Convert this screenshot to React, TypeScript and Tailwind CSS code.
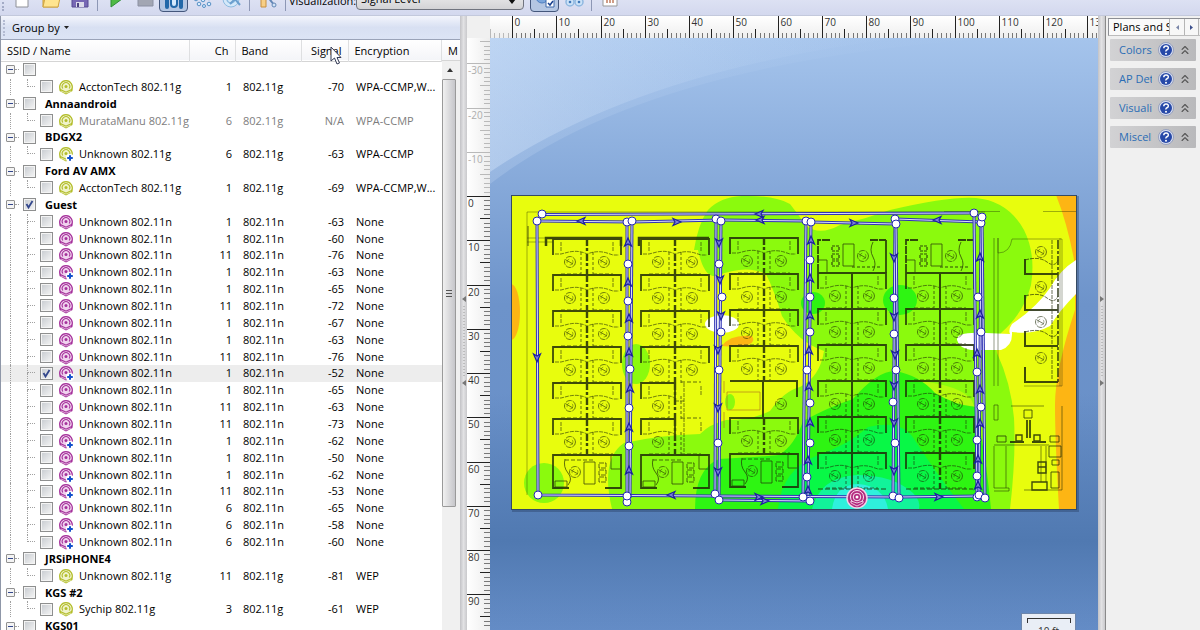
import React from 'react';
import clsx from 'clsx';
import { ChevronsUp } from 'lucide-react';

type AccessPoint = {
  name: string;
  ch: number;
  band: string;
  signal: string;
  encryption: string;
  plus?: boolean;
  checked?: boolean;
  dimmed?: boolean;
};

type Network = { ssid: string; checked?: boolean; points: AccessPoint[] };

const guest = (ch: number, signal: number, plus = false, checked = false): AccessPoint => ({
  name: 'Unknown 802.11n',
  ch,
  band: '802.11n',
  signal: String(signal),
  encryption: 'None',
  plus,
  checked,
});

const networks: Network[] = [
  { ssid: '', points: [{ name: 'AcctonTech 802.11g', ch: 1, band: '802.11g', signal: '-70', encryption: 'WPA-CCMP,W...' }] },
  { ssid: 'Annaandroid', points: [{ name: 'MurataManu 802.11g', ch: 6, band: '802.11g', signal: 'N/A', encryption: 'WPA-CCMP', dimmed: true }] },
  { ssid: 'BDGX2', points: [{ name: 'Unknown 802.11g', ch: 6, band: '802.11g', signal: '-63', encryption: 'WPA-CCMP', plus: true }] },
  { ssid: 'Ford AV AMX', points: [{ name: 'AcctonTech 802.11g', ch: 1, band: '802.11g', signal: '-69', encryption: 'WPA-CCMP,W...' }] },
  {
    ssid: 'Guest',
    checked: true,
    points: [
      guest(1, -63), guest(1, -60), guest(11, -76), guest(1, -63, true), guest(1, -65),
      guest(11, -72), guest(1, -67), guest(1, -63), guest(11, -76), guest(1, -52, true, true),
      guest(1, -65), guest(11, -63), guest(11, -73), guest(1, -62, true), guest(1, -50),
      guest(1, -62, true), guest(11, -53, true), guest(6, -65), guest(6, -58, true), guest(6, -60, true),
    ],
  },
  { ssid: 'JRSiPHONE4', points: [{ name: 'Unknown 802.11g', ch: 11, band: '802.11g', signal: '-81', encryption: 'WEP' }] },
  { ssid: 'KGS #2', points: [{ name: 'Sychip 802.11g', ch: 3, band: '802.11g', signal: '-61', encryption: 'WEP' }] },
  { ssid: 'KGS01', points: [] },
];

/* ---------- toolbar ---------- */

const ToolButton = ({ label, pressed, children }: { label: string; pressed?: boolean; children: React.ReactNode }) => (
  <button
    type="button"
    aria-label={label}
    className={clsx(
      'flex h-[26px] w-[29px] shrink-0 items-center justify-center rounded-sm',
      pressed && 'border border-[#44577c] bg-[#b4c6e2]',
    )}
  >
    <svg viewBox="0 0 20 20" className="h-5 w-5">
      {children}
    </svg>
  </button>
);

const Separator = () => <span className="mx-[3px] h-6 w-px shrink-0 bg-[#8d97b5]" />;

const Toolbar = () => (
  <div className="flex h-4 shrink-0 items-end overflow-hidden border-b border-[#c3c9dc] bg-[#d9ddf0]">
    <div className="flex h-[30px] w-full items-center bg-linear-to-b from-[#e6eaf8] to-[#d3d8ee] pb-0.5">
      <span className="mx-[2px] h-6 w-[3px] shrink-0 border-l-2 border-dotted border-[#a3abc6]" />
      <ToolButton label="New">
        <path d="M4 1h12v17H4z" fill="#fff" stroke="#8e9097" />
      </ToolButton>
      <ToolButton label="Open">
        <path d="M2 4h6l2 2h7v12H2z" fill="#f5cf58" stroke="#c99b35" />
        <path d="M4 9h15l-2 9H2z" fill="#ffe58f" stroke="#d0a544" />
      </ToolButton>
      <ToolButton label="Save">
        <path d="M2 2h16v16H2z" fill="#7768b4" stroke="#574a92" />
        <path d="M5 2h10v8H5z" fill="#f1effa" />
        <path d="M6 13h8v5H6z" fill="#dcdcea" />
        <path d="M7 14h2v4H7z" fill="#4d4380" />
      </ToolButton>
      <Separator />
      <ToolButton label="Start survey">
        <path d="M5 2l11 8-11 8z" fill="#4fba45" stroke="#2f8d37" />
      </ToolButton>
      <ToolButton label="Stop survey">
        <path d="M3 2h15v15H3z" fill="#a2a6b3" stroke="#8b90a2" />
      </ToolButton>
      <ToolButton label="Access points" pressed>
        <path d="M3 0v18M17 0v18" stroke="#2268a8" strokeWidth="4" strokeLinecap="round" />
        <rect x="7" y="3" width="6" height="15" rx="3" fill="#d5eafd" stroke="#2268a8" strokeWidth="2" />
      </ToolButton>
      <ToolButton label="Path">
        <g fill="#d6ecff" stroke="#5790c5">
          <circle cx="3" cy="10" r="1.8" /><circle cx="6" cy="15" r="1.8" /><circle cx="10" cy="11" r="1.8" />
          <circle cx="16" cy="9" r="1.8" /><circle cx="16" cy="15" r="1.8" /><circle cx="11" cy="17" r="1.5" />
        </g>
      </ToolButton>
      <ToolButton label="Zoom">
        <circle cx="9" cy="10" r="8" fill="#d4e8f9" stroke="#8dbbe0" />
        <circle cx="9" cy="10" r="4" fill="none" stroke="#8dbbe0" strokeWidth="1.5" />
        <path d="M8 15l5-5 5 6" fill="none" stroke="#6c9fce" strokeWidth="2" />
      </ToolButton>
      <Separator />
      <ToolButton label="Calibrate">
        <path d="M3 1h5v17H3z" fill="#f7cf87" stroke="#c78f40" />
        <path d="M7 4l9 12" stroke="#6387b6" strokeWidth="2" />
        <circle cx="16" cy="16" r="2" fill="#d1e3f6" stroke="#6387b6" />
      </ToolButton>
      <Separator />
      <label htmlFor="visualization" className="w-[67px] shrink-0 pt-1">Visualization:</label>
      <select
        id="visualization"
        className="h-[22px] w-[168px] shrink-0 appearance-none rounded-sm border border-[#70747f] bg-linear-to-b from-[#f3f3f3] to-[#d3d3d6] px-1"
      >
        <option>Signal Level</option>
      </select>
      <svg viewBox="0 0 8 5" className="-ml-4 mt-1 h-[5px] w-2 shrink-0">
        <path d="M0 0h8L4 5z" fill="#111" />
      </svg>
      <span className="w-[14px] shrink-0" />
      <ToolButton label="Show selected only" pressed>
        <circle cx="7" cy="8" r="6" fill="#7ba6dc" stroke="#4d7ec0" />
        <path d="M11 10h8v8h-8z" fill="#fff" stroke="#3e6bab" />
        <path d="M13 14l2 2 3-4" fill="none" stroke="#163f8e" strokeWidth="1.5" />
      </ToolButton>
      <ToolButton label="Group access points">
        <g fill="#cbe2f7" stroke="#8fb8e0" strokeWidth="1.5">
          <circle cx="6" cy="13" r="4" /><circle cx="15" cy="13" r="4" />
        </g>
        <circle cx="6" cy="13" r="1.3" fill="#3f79ba" /><circle cx="15" cy="13" r="1.3" fill="#3f79ba" />
      </ToolButton>
      <Separator />
      <ToolButton label="Report">
        <path d="M3 1h14v16H3z" fill="#fff" stroke="#999" />
        <path d="M7 8v6M10 5v9M13 9v5" stroke="#cf9c86" strokeWidth="2" />
      </ToolButton>
    </div>
  </div>
);

/* ---------- network list ---------- */

const ApIcon = ({ color, tint, plus }: { color: string; tint: string; plus?: boolean }) => (
  <svg viewBox="0 0 16 16" className="h-4 w-4 shrink-0">
    <circle cx="8" cy="7.500" r="6.500" fill={tint} />
    <g fill="none" stroke={color}>
      <path d="M2.500 11A6.300 6.300 0 1 1 13.500 11" strokeWidth="1.200" />
      <path d="M4.800 9.500A3.800 3.800 0 1 1 11.200 9.500" strokeWidth="1.100" />
    </g>
    <circle cx="8" cy="7.500" r="1.500" fill={color} />
    <path d="M1.500 9.500L8 12.500l6.500-3v2.500L8 15.500 1.500 12z" fill={color} />
    <path d="M3 12l5 2 5-2" fill="none" stroke={tint} strokeWidth="0.700" />
    {plus && (
      <>
        <circle cx="12" cy="12" r="4" fill="#fff" />
        <path d="M12 9.2v5.6M9.2 12h5.6" stroke="#1250cc" strokeWidth="2" />
      </>
    )}
  </svg>
);

const CheckBox = ({ label, checked }: { label: string; checked?: boolean }) => (
  <span className="relative h-[13px] w-[13px] shrink-0">
    <input
      type="checkbox"
      aria-label={label}
      defaultChecked={checked}
      className="peer block h-[13px] w-[13px] appearance-none border border-[#8e8f8f] bg-linear-to-br from-[#c6cacf] to-[#f6f6f6] outline-1 -outline-offset-2 outline-[#f4f4f4]"
    />
    <svg viewBox="0 0 13 13" className="pointer-events-none absolute inset-0 hidden h-[13px] w-[13px] peer-checked:block">
      <path d="M3.5 6l2 3.5L9.5 3" fill="none" stroke="#33478c" strokeWidth="1.8" />
    </svg>
  </span>
);

const GroupRow = ({ network }: { network: Network }) => (
  <tr>
    <td colSpan={5} className="p-0">
      <div className="flex h-4 items-center">
        <button
          type="button"
          aria-label={`Collapse ${network.ssid}`}
          className="ml-[5px] flex h-[9px] w-[9px] items-center justify-center rounded-[1px] border border-[#919191] bg-[#f4f4f4]"
        >
          <span className="h-px w-[5px] bg-[#33478c]" />
        </button>
        <span className="mr-1 h-px w-1 border-t border-dotted border-[#a0a0a0]" />
        <CheckBox label={network.ssid || 'Hidden network'} checked={network.checked} />
        <span className="ml-[9px] font-bold">{network.ssid}</span>
      </div>
    </td>
  </tr>
);

const PointRow = ({ point, last }: { point: AccessPoint; last: boolean }) => (
  <tr className={clsx(point.checked && 'bg-[#ededed]', point.dimmed && 'text-[#7d7d7d]')}>
    <td className="p-0">
      <div className="flex h-4 items-center">
        <span className="h-4 w-[10px] shrink-0 border-r border-dotted border-[#a0a0a0]" />
        <span className="ml-4 flex h-4 w-2 shrink-0 flex-col">
          <span className="h-2 border-b border-l border-dotted border-[#a0a0a0]" />
          <span className={clsx('h-2', !last && 'border-l border-dotted border-[#a0a0a0]')} />
        </span>
        <span className="mx-[5px] flex">
          <CheckBox label={`${point.name} ${point.signal}`} checked={point.checked} />
        </span>
        {point.band === '802.11n' ? (
          <ApIcon color="#a5329b" tint="#f0d3ee" plus={point.plus} />
        ) : (
          <ApIcon color="#b3bd2c" tint="#f0f3cb" plus={point.plus} />
        )}
        <span className="ml-[5px]">{point.name}</span>
      </div>
    </td>
    <td className="p-0 pr-[3px] text-right">{point.ch}</td>
    <td className="p-0 pl-2">{point.band}</td>
    <td className="p-0 pr-1 text-right">{point.signal}</td>
    <td className="p-0 pl-2">{point.encryption}</td>
  </tr>
);

const NetworkTable = () => (
  <table className="h-[595px] w-full table-fixed border-collapse whitespace-nowrap">
    <colgroup>
      <col className="w-[188px]" />
      <col className="w-[46px]" />
      <col className="w-[66px]" />
      <col className="w-[47px]" />
      <col />
    </colgroup>
    <thead>
      <tr className="h-[21px] border-b border-[#d5d5d5] bg-linear-to-b from-white to-[#f4f5f8] text-left">
        <th className="border-r border-[#dedfe1] p-0 pl-1.5 pt-px font-normal">SSID / Name</th>
        <th className="border-r border-[#dedfe1] p-0 pr-1.5 pt-px text-right font-normal">Ch</th>
        <th className="border-r border-[#dedfe1] p-0 pl-1.5 pt-px font-normal">Band</th>
        <th className="border-r border-[#dedfe1] p-0 pr-1.5 pt-px text-right font-normal">Signal</th>
        <th className="border-r border-[#dedfe1] p-0 pl-1.5 pt-px font-normal">Encryption</th>
      </tr>
    </thead>
    <tbody>
      {networks.map((network) => (
        <React.Fragment key={network.ssid}>
          <GroupRow network={network} />
          {network.points.map((point, i) => (
            <PointRow key={i} point={point} last={i === network.points.length - 1} />
          ))}
        </React.Fragment>
      ))}
    </tbody>
  </table>
);

const NetworkPanel = () => (
  <section className="relative flex w-[460px] shrink-0 flex-col overflow-hidden border-l border-[#8f97a8] bg-white">
    <div className="flex h-6 shrink-0 items-center border-b border-[#9aa3b8] bg-linear-to-b from-[#f3f5fc] via-[#d8e0f2] to-[#dce4f5]">
      <span className="ml-0.5 h-4 w-[3px] border-l-2 border-dotted border-[#b3bbd2]" />
      <button type="button" className="ml-[6px] flex items-center gap-1">
        Group by
        <svg viewBox="0 0 5 3" className="h-[3px] w-[5px]"><path d="M0 0h5L2.500 3z" fill="#222" /></svg>
      </button>
    </div>
    <div className="flex min-h-0 flex-1">
      <div className="min-w-0 flex-1 overflow-hidden">
        <NetworkTable />
      </div>
      <div className="flex w-[18px] shrink-0 flex-col">
        <div className="h-[21px] shrink-0 overflow-hidden border-b border-[#d5d5d5] bg-linear-to-b from-white to-[#f4f5f8] pl-1.5 leading-[22px]">M</div>
        <div className="flex min-h-0 flex-1 flex-col bg-[#f0f0f0]">
          <button type="button" aria-label="Scroll up" className="flex h-[18px] w-4 shrink-0 items-center justify-center">
            <svg viewBox="0 0 6 4" className="h-1 w-1.5"><path d="M0 4h6L3 0z" fill="#333" /></svg>
          </button>
          <div className="flex h-[428px] w-[14px] shrink-0 flex-col items-center justify-center gap-0.5 rounded-[1px] border border-[#9a9a9a] bg-linear-to-r from-[#f1f1f1] to-[#c6c6ca]">
            <span className="h-px w-1.5 bg-[#555]" />
            <span className="h-px w-1.5 bg-[#555]" />
            <span className="h-px w-1.5 bg-[#555]" />
          </div>
        </div>
      </div>
    </div>
    <svg viewBox="0 0 12 19" className="pointer-events-none absolute left-[329px] top-[30px] h-[19px] w-3">
      <path d="M1 1v14l3.500-3 2.500 6 2.500-1-2.500-5.500H11z" fill="#fff" stroke="#333a55" />
    </svg>
  </section>
);

const Splitter = ({ flip }: { flip?: boolean }) => (
  <div className="flex w-[7px] shrink-0 flex-col items-center bg-linear-to-r from-[#c2c2c6] via-[#e2e2e4] to-[#c9c9cc] pt-[279px]">
    <svg viewBox="0 0 6 92" className={clsx('h-[92px] w-1.5', flip && '-scale-x-100')}>
      <path d="M5 1v6L1 4zM5 85v6L1 88z" fill="#777" />
      <path d="M3 11v70" stroke="#999" strokeDasharray="1 2" />
    </svg>
  </div>
);

/* ---------- rulers ---------- */

const STEP = 44.25;

const range = (from: number, to: number) => Array.from({ length: to - from + 1 }, (_, i) => from + i);

const tickLength = (i: number) => (i % 10 === 0 ? 22 : i % 5 === 0 ? 9 : 5);

const TopRuler = () => (
  <svg className="h-[22px] min-w-0 flex-1" fontSize="10">
    {range(-5, 135).map((i) => {
      const x = Math.round(22 + (i * STEP) / 10) + 0.5;
      return (
        <React.Fragment key={i}>
          <path d={`M${x} 22v${-tickLength(i)}`} stroke={i < 0 ? '#b9b9b9' : i % 5 === 0 ? '#222' : '#777'} />
          {i % 10 === 0 && <text x={x + 2} y="10" fill="#333">{i}</text>}
        </React.Fragment>
      );
    })}
  </svg>
);

const SideRuler = () => (
  <svg className="h-full w-[23px] shrink-0 bg-linear-to-r from-white to-[#ededed]" fontSize="10">
    {range(-35, 130).map((i) => {
      const y = Math.round(158 + (i * STEP) / 10) + 0.5;
      return (
        <React.Fragment key={i}>
          <path d={`M23 ${y}h${-tickLength(i) - 1}`} stroke={i < 0 ? '#b9b9b9' : i % 5 === 0 ? '#222' : '#777'} />
          {i % 10 === 0 && <text x="1" y={y + 10} fill={i < 0 ? '#adadad' : '#333'}>{i}</text>}
        </React.Fragment>
      );
    })}
  </svg>
);

/* ---------- floor plan ---------- */

const Chair = ({ x, y }: { x: number; y: number }) => (
  <g fill="none" strokeWidth="0.9" opacity="0.8">
    <circle cx={x} cy={y} r="5.500" strokeDasharray="6 1" />
    <circle cx={x} cy={y} r="3" strokeWidth="0.600" strokeDasharray="5 3" />
    <path d={`M${x - 4} ${y - 2}l7 4`} />
  </g>
);

// Two facing desks that share a partition
const Cubicle = ({ x, y, half, solid }: { x: number; y: number; half?: boolean; solid?: boolean }) => (
  <g fill="none">
    <path d={half ? `M${x} ${y + 16}V${y}H${x + 34}V${y + 16}` : `M${x} ${y + 16}V${y}H${x + 68}V${y + 16}`} strokeWidth="1.8" />
    <path d={`M${x + 34} ${y}v36`} strokeWidth={solid ? 2 : 2.4} strokeDasharray={solid ? undefined : '7 2 3 3'} />
    <path
      d={`M${x + 2} ${y + 15}h6l8 -2q10 -2 18 2${half ? '' : 'q10 -4 20 -1l6 2h6'}M${x + 8} ${y + 3}v10M${x + 60} ${y + 3}v10`}
      strokeWidth="0.7"
      strokeDasharray="4 1"
    />
    <path d={`M${x + 28} ${y + 13}v23M${x + 40} ${y + 13}v23`} strokeWidth="0.8" strokeDasharray="3 2" />
    <path d={`M${x + 8} ${y + 35}h20M${x + 40} ${y + 35}h20`} strokeWidth="0.8" strokeDasharray="4 2" />
    <Chair x={x + 17} y={y + 23} />
    {!half && <Chair x={x + 51} y={y + 23} />}
  </g>
);

const Office = ({ x, y }: { x: number; y: number }) => (
  <g fill="none">
    <path d={`M${x + 16} ${y + 33}H${x}V${y}H${x + 68}V${y + 33}H${x + 52}`} strokeWidth="1.8" />
    <path d={`M${x + 31} ${y + 7}h11v22h-11zM${x + 2} ${y + 26}h12v6h-12zM${x + 12} ${y + 4}q-2 8 3 14t0 12M${x + 58} ${y}v14h9`} strokeWidth="0.8" />
    <path d={`M${x + 46} ${y + 8}h7v5h-7zM${x + 46} ${y + 15}h7v5h-7zM${x + 46} ${y + 22}h7v5h-7z`} strokeWidth="0.8" strokeDasharray="5 1" />
    <path d={`M${x + 12} ${y + 5}h30`} strokeWidth="0.8" strokeDasharray="4 2" />
    <Chair x={x + 22} y={y + 17} />
  </g>
);

const TopOffice = ({ x }: { x: number }) => (
  <g fill="none">
    <path d={`M${x + 12} 240H${x}V273M${x + 52} 240H${x + 68}`} strokeWidth="1.8" strokeDasharray="8 1" />
    <path d={`M${x + 68} 240V273`} strokeWidth="1.8" />
    <path d={`M${x + 25} 244h11v22h-11zM${x} 260h9v13M${x + 55} 242q-4 8 0 15t0 14`} strokeWidth="0.8" />
    <path d={`M${x + 14} 246h7v5h-7zM${x + 14} 254h7v5h-7zM${x + 14} 261h7v5h-7z`} strokeWidth="1.2" strokeDasharray="3 1" />
    <path d={`M${x + 34} 267h30`} strokeWidth="1.2" strokeDasharray="3 2" />
    <Chair x={x + 45} y={256} />
  </g>
);

const rows = [239, 275, 311, 347, 383, 419];
const innerRows = [273, 309, 345, 381, 417, 453];

const Furniture = () => (
  <g stroke="#1f2a08" opacity="0.85">
    {rows.map((y) => <Cubicle key={y} x={553} y={y} />)}
    {rows.map((y) => <Cubicle key={y} x={641} y={y} half={y > 360} />)}
    {rows.map((y) => y !== 383 && <Cubicle key={y} x={730} y={y - 1} />)}
    {innerRows.map((y) => <Cubicle key={y} x={818} y={y} solid />)}
    {innerRows.map((y) => <Cubicle key={y} x={906} y={y} solid={y < 360} />)}
    <Office x={553} y={455} />
    <Office x={641} y={455} />
    <Office x={730} y={454} />
    <TopOffice x={818} />
    <TopOffice x={906} />
    <g fill="none">
      <path d="M546 246v-8h75v8M639 246v-8h70" strokeWidth="2.500" />
      <path d="M730 381h67v16M763 381v36" strokeWidth="2" />
      <path d="M727 392h33v18h-33zM724 381v12M724 412v16" stroke="#a86a1c" strokeWidth="1" opacity="0.7" />
      <Chair x={781} y={404} />
      <path d="M684 383v70M675 401h9" strokeWidth="0.7" strokeDasharray="4 1" />
      <path d="M852 273v217" strokeWidth="1.500" />
      <path d="M818 489h68M906 489h67" strokeDasharray="5 2" />
      <path d="M527 212H985M944 211.500h56M1043 211.500h33M527 212v283M527 238h26M527 242h26" strokeWidth="0.8" opacity="0.55" />
      <path d="M528 226v20" strokeWidth="1.500" opacity="0.6" />
      {/* east wing */}
      <path d="M994 238v148M998 238v148" strokeWidth="1" opacity="0.55" />
      <path d="M998 238v15q12 0 14-14h50v147h-38M1060 238v148" strokeWidth="0.9" opacity="0.5" />
      <path d="M1058 240v143" strokeWidth="1.600" strokeDasharray="9 2 3 2" />
      <path d="M1025 259v15h33M1025 295v15h33M1025 331v15h33M1025 367v15h33" strokeWidth="2" />
      <path d="M1025 260q14 -4 22 2t11 -2M1025 296q14 -4 22 2t11 -2M1025 332q14 -4 22 2t11 -2M1052 240v140" strokeWidth="0.8" strokeDasharray="4 1" />
      <Chair x={1041} y={252} />
      <Chair x={1041} y={287} />
      <Chair x={1041} y={322} />
      <Chair x={1041} y={358} />
      {/* kitchen */}
      <path d="M994 405h4v15h-4zM994 446v42h15v3h-15M994 445h55M1006 446v42M1011 406h33M1062 406v84h-38M1041 446v36M1046 446v36" strokeWidth="0.9" opacity="0.7" />
      <path d="M1027 420v18M1030 420v18M1010 442h14M1032 442h14" strokeWidth="1.800" />
      <path d="M1024 410h8v8h-8zM997 436h9v6h-9zM1050 436h9v6h-9zM1049 446h12v11h-12zM1051 472h8v16h-8zM1052 460h7v5h-7z" strokeWidth="0.9" />
      <path d="M1038 462h8v11h-8zM1038 467h8M1032 482h15v8h-15zM1016 435h6v6h-6zM1034 435h6v6h-6z" strokeWidth="1.400" />
    </g>
  </g>
);

const HeatMap = () => (
  <>
    <rect x="512" y="195" width="564" height="314" fill="#e8fd0d" />
    <path d="M1056 195q12 30 19 70v45q-20 60-20 95t4 104h20V195z" fill="#fdb514" />
    <ellipse cx="511" cy="312" rx="9" ry="28" fill="#fdb514" />
    <path d="M722 346q8-12 30-10 4 6-4 9t-26 1z" fill="#fdb514" />
    <path
      d="M694 250q4-26 14-40 14-15 40-14 28 0 42 8 8 10 16 22 14 10 34-1 25-6 50-15 60-14 86-12 32 3 48 32 12 24 7 55-7 28-30 48-6 8-4 20 14 30 17 65 2 40-4 91H612q-12-50 12-66 36-8 76-9 10-10 26-14 26 0 44-9 14-20 30-24 20-10 24-36-26-9-42-35-8-26-16-42-20-10-50 2-12 2-18-26z"
      fill="#8bfa0d"
    />
    <ellipse cx="636" cy="364" rx="14" ry="20" fill="#8bfa0d" />
    <ellipse cx="544" cy="483" rx="20" ry="20" fill="#8bfa0d" />
    <ellipse cx="730" cy="402" rx="5" ry="8" fill="#8bfa0d" />
    <path d="M912 380q30 3 46 10 14 6 16 16-30 0-44-10z" fill="#b6fb0d" />
    <path
      d="M695 509q0-40 24-50 40-2 60-4 16-10 24-34 26-14 50-22 24-28 42-28 24 4 40 22 20 12 40 14 10 40 16 102z"
      fill="#2ef512"
    />
    <ellipse cx="900" cy="300" rx="17" ry="15" fill="#2ef512" />
    <ellipse cx="813" cy="303" rx="12" ry="11" fill="#2ef512" />
    <path d="M778 509q4-40 40-54 30-10 50-28 34-8 46 12 22 34 50 70z" fill="#08f846" />
    <path d="M812 509q8-32 45-34 36 0 56 18 8 8 6 16z" fill="#12f39a" />
    <path d="M832 509q3-24 26-25 26 2 30 25z" fill="#2ff0dc" />
    <g fill="#fff">
      <ellipse cx="722" cy="324" rx="17" ry="9" />
      <path d="M1076 260q-16 10-26 28-14 20-38 36-4 6-2 10l-24-1q-30-2-29 7 2 8 14 10h30q12-4 11-18 22 3 38-6 10-16 26-32z" />
    </g>
  </>
);

const legs = [
  'M542 214.500L974 213', 'M537 221L632 222L721 220', 'M537 221L538 495L717 496', 'M627 222L627 502', 'M632 221L630 498',
  'M716 221L715 494', 'M721 221L719 500', 'M721 220L806 221', 'M806 221L803 497', 'M811 222L808 502', 'M811 222L895 224',
  'M895 219L893 496', 'M896 224L899 498', 'M981 222L895 219', 'M974 213L977 497', 'M981 222L979 495', 'M982 217L985 498',
  'M717 496L899 497L979 496', 'M719 500L810 501',
];

const stops = [
  [542, 214], [537, 221], [627, 222], [632, 221], [716, 219], [721, 221], [806, 221], [811, 222], [895, 219], [896, 224],
  [974, 213], [981, 223], [982, 217], [628, 264], [628, 301], [628, 336], [630, 369], [629, 408], [629, 446], [627, 502],
  [627, 496], [538, 495], [719, 264], [722, 297], [721, 332], [719, 370], [718, 443], [715, 494], [719, 500],
  [810, 260], [810, 297], [810, 332], [807, 370], [810, 403], [810, 443], [807, 477], [803, 497], [810, 501],
  [894, 298], [894, 334], [896, 370], [893, 402], [895, 443], [893, 496], [899, 498],
  [978, 297], [981, 332], [977, 372], [981, 407], [977, 440], [977, 476], [977, 497], [979, 495], [985, 498],
];

// x, y, heading in degrees (0 = up)
const arrows = [
  [759, 214, 270], [581, 221, 270], [677, 222, 90], [760, 220, 270], [854, 223, 90], [937, 220, 270],
  [537, 358, 180], [628, 242, 0], [628, 282, 0], [629, 318, 0], [629, 352, 0], [630, 388, 0], [629, 427, 0], [629, 470, 0],
  [719, 243, 180], [720, 280, 180], [721, 316, 180], [718, 350, 180], [718, 408, 180], [718, 472, 180],
  [811, 240, 0], [810, 278, 0], [810, 315, 0], [809, 350, 0], [809, 386, 0], [810, 422, 0], [808, 460, 0], [808, 490, 0],
  [894, 258, 180], [894, 317, 180], [895, 355, 180], [894, 386, 180], [894, 423, 180], [894, 471, 180],
  [980, 257, 0], [980, 314, 0], [977, 353, 0], [980, 389, 0], [980, 423, 0], [978, 459, 0], [978, 485, 0],
  [671, 495, 270], [759, 497, 90], [765, 501, 90], [939, 497, 90],
];

const SurveyPath = () => (
  <g fill="none">
    {legs.map((d) => (
      <g key={d}>
        <path d={d} stroke="#3033b4" strokeWidth="3" />
        <path d={d} stroke="#dcddfa" strokeWidth="1" />
      </g>
    ))}
    {arrows.map(([x, y, angle]) => (
      <path
        key={`${x},${y}`}
        d="M0 -4L3.500 4L0 2L-3.500 4z"
        transform={`translate(${x} ${y}) rotate(${angle})`}
        fill="#7d80d8"
        stroke="#1b1f9e"
        strokeWidth="1.200"
      />
    ))}
    {stops.map(([x, y]) => (
      <circle key={`${x},${y}`} cx={x} cy={y} r="4" fill="#fff" stroke="#2629ad" />
    ))}
  </g>
);

const ActiveAp = () => (
  <g>
    <circle cx="857" cy="498" r="10" fill="#b32a7e" stroke="#f3d3e6" strokeWidth="1.500" />
    <g fill="none" stroke="#fbe6f3">
      <circle cx="857" cy="497" r="6.500" />
      <circle cx="857" cy="497" r="3.800" />
    </g>
    <circle cx="857" cy="497" r="1.500" fill="#fff" />
    <path d="M851 501l6 2 6-2v2l-6 3-6-3z" fill="#b32a7e" stroke="#fbe6f3" strokeWidth="0.800" />
  </g>
);

const PlanCanvas = () => (
  <div className="relative min-w-0 flex-1 overflow-hidden bg-linear-to-b from-[#a5c4ec] via-[#6d93ca] via-45% to-[#648cc6]">
    <div className="absolute inset-0 bg-linear-to-b from-transparent from-60% via-[#5079b1] via-85% to-transparent" />
    <svg viewBox="490 38 608 592" className="relative h-[592px] w-[608px]">
      <defs>
        <linearGradient id="glow" x1="0" y1="0" x2="1" y2="0">
          <stop offset="0" stopColor="#cfe1f8" stopOpacity="0.45" />
          <stop offset="1" stopColor="#b9d3f4" stopOpacity="0" />
        </linearGradient>
      </defs>
      <path d="M490 38H900Q640 70 490 172z" fill="url(#glow)" />
      <path d="M490 38H1000Q650 60 490 184z" fill="url(#glow)" opacity="0.5" />
      <rect x="512" y="196" width="567" height="316" fill="#1f3357" opacity="0.35" />
      <rect x="511" y="195" width="566" height="315" fill="#354a63" />
      <svg x="512" y="196" width="564" height="313" viewBox="512 196 564 313">
        <HeatMap />
        <Furniture />
      </svg>
      <SurveyPath />
      <ActiveAp />
    </svg>
    <div className="absolute left-[531px] top-[575px] flex h-8 w-[55px] flex-col items-center border border-[#6d86ab] bg-[#e9eef6] pt-1 text-[10px] leading-4 text-[#333]">
      <span className="h-[5px] w-11 border-x border-t border-[#333]" />
      10 ft
    </div>
  </div>
);

/* ---------- right panel ---------- */

const HelpIcon = () => (
  <svg viewBox="0 0 16 16" className="h-4 w-4">
    <circle cx="8" cy="8" r="7.500" fill="#d9dff0" stroke="#8793b8" strokeWidth="0.800" />
    <circle cx="8" cy="8" r="6" fill="#2749a8" />
    <path d="M5.800 6.200q0-2.200 2.300-2.200t2.200 2q0 1.200-1.300 1.800T8 9.500" fill="none" stroke="#fff" strokeWidth="1.500" />
    <circle cx="8" cy="11.700" r="1" fill="#fff" />
  </svg>
);

const SidePanel = () => (
  <aside className="w-[95px] shrink-0 overflow-hidden border-l border-[#8a8a8a] bg-[#f0f0f0] pt-0.5">
    <div className="ml-[2px] flex h-[18px] border-b border-l border-t border-[#8c8e94] border-b-[#bcbcbc]">
      <button type="button" className="w-[60px] overflow-hidden whitespace-nowrap bg-[#fafafa] pl-1 text-left leading-4">Plans and Surveys</button>
      <button type="button" aria-label="Previous tab" className="flex w-[15px] items-center justify-center border-l border-[#b5b5b5] bg-[#f7f7f7]">
        <svg viewBox="0 0 3 5" className="h-[5px] w-[3px]"><path d="M3 0v5L0 2.500z" fill="#7a86a8" /></svg>
      </button>
      <button type="button" aria-label="Next tab" className="flex w-[15px] items-center justify-center border-x border-[#b5b5b5] bg-[#f7f7f7]">
        <svg viewBox="0 0 3 5" className="h-[5px] w-[3px]"><path d="M0 0v5L3 2.500z" fill="#3b4f8c" /></svg>
      </button>
    </div>
    <div className="flex flex-col gap-[7px] px-1 pt-[3px]">
      {['Colors', 'AP Detection', 'Visualization', 'Miscellaneous'].map((title) => (
        <div key={title} className="flex h-[22px] items-center rounded-[1px] bg-linear-to-r from-[#d2d2d4] to-[#b9b9bb] pl-[9px] pr-1">
          <h2 className="w-[34px] overflow-hidden whitespace-nowrap text-[#2a6db5]">{title}</h2>
          <button type="button" aria-label={`${title} help`} className="ml-1.5">
            <HelpIcon />
          </button>
          <button type="button" aria-label={`Collapse ${title}`} className="ml-1">
            <ChevronsUp className="h-3.5 w-3.5 text-[#555]" />
          </button>
        </div>
      ))}
    </div>
  </aside>
);

const App = () => {
  return (
    <div className="flex h-screen flex-col overflow-hidden bg-[#f0f0f0] font-['Open_Sans','Noto_Sans',sans-serif] text-[11px] leading-4 text-black">
      <Toolbar />
      <main className="flex min-h-0 flex-1">
        <NetworkPanel />
        <Splitter />
        <section className="flex min-w-0 flex-1 flex-col">
          <div className="flex h-[22px] shrink-0 bg-linear-to-b from-white to-[#eeeeee]">
            <span className="w-[23px] shrink-0 bg-[#f0f0f0]" />
            <TopRuler />
          </div>
          <div className="flex min-h-0 flex-1">
            <SideRuler />
            <PlanCanvas />
          </div>
        </section>
        <Splitter flip />
        <SidePanel />
      </main>
    </div>
  );
};

export default App;
